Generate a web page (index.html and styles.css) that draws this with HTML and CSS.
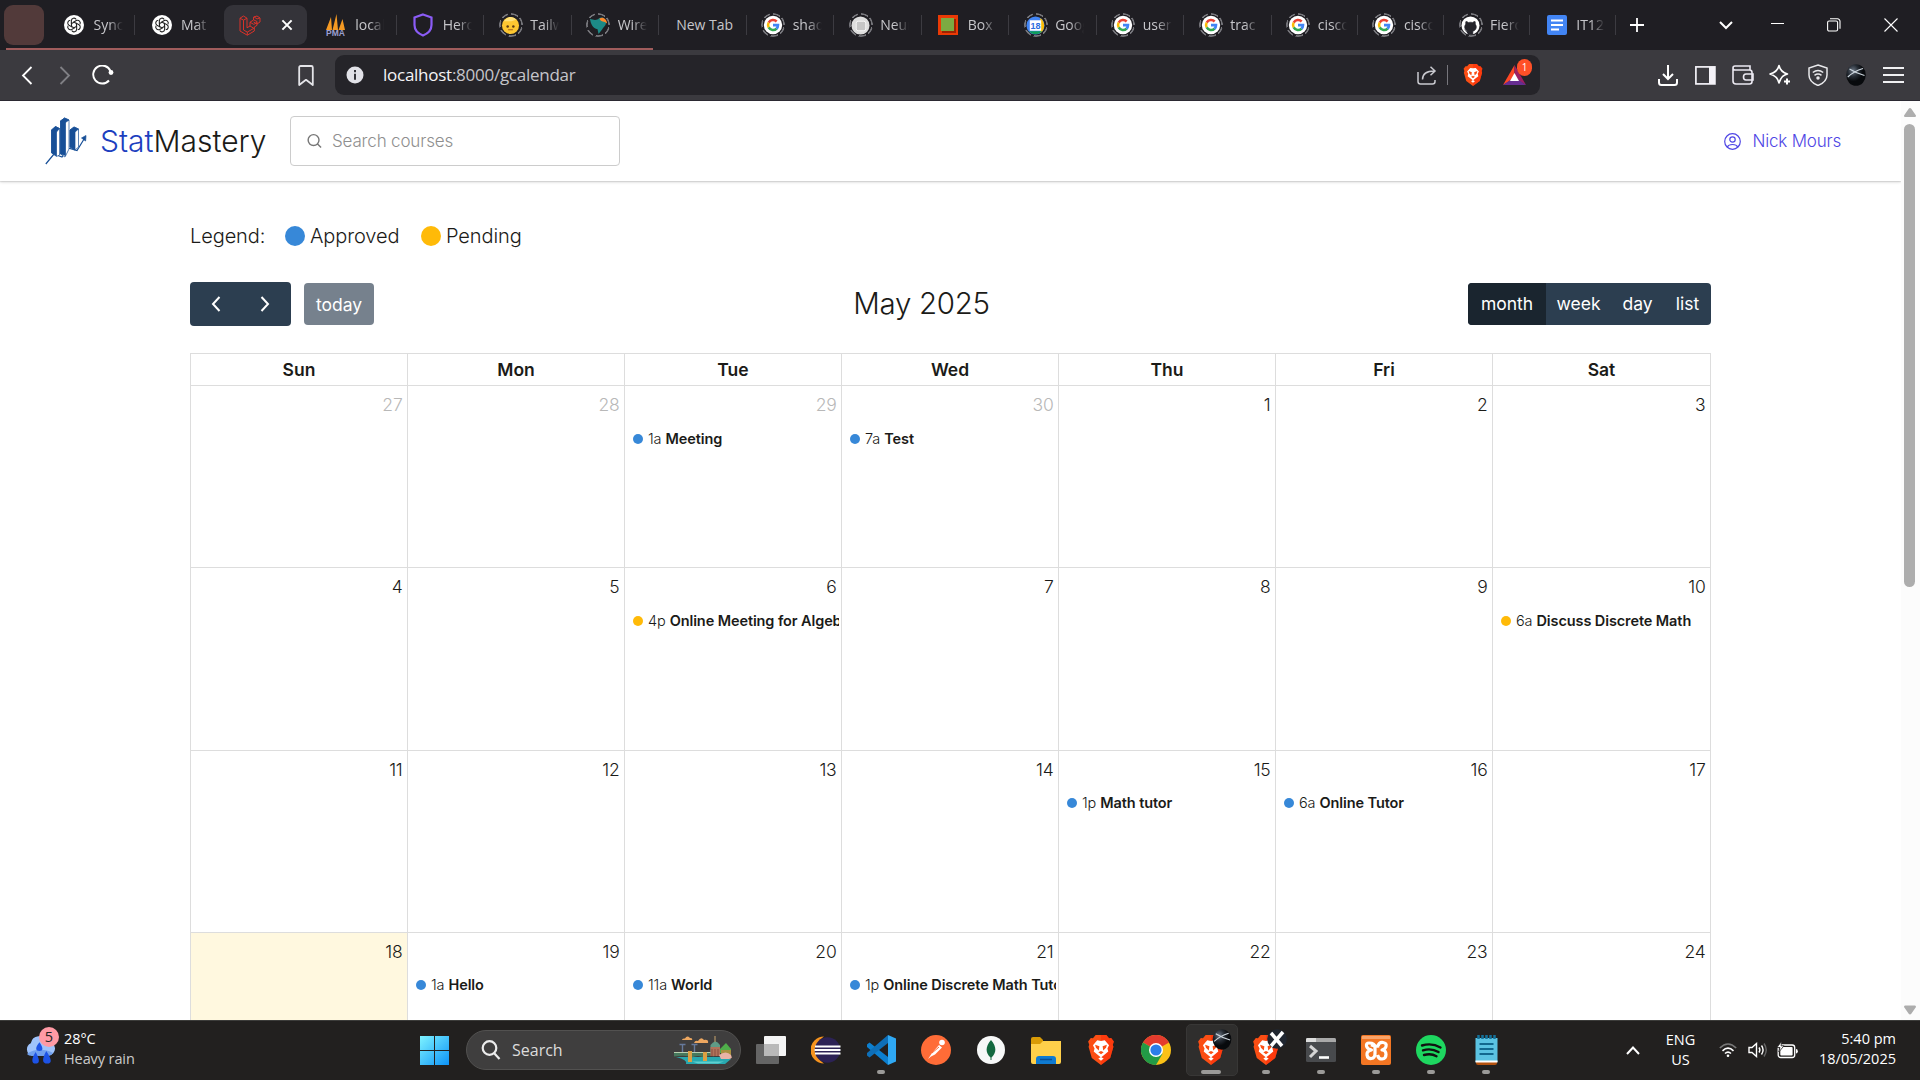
FILE: index.html
```html
<!DOCTYPE html>
<html lang="en">
<head>
<meta charset="utf-8">
<title>StatMastery</title>
<link rel="stylesheet" href="styles.css">
</head>
<body>
<svg class="defs" aria-hidden="true">
  <defs>
    <symbol id="google" viewBox="0 0 24 24"><circle cx="12" cy="12" r="10" fill="#fff"/><g fill="none" stroke-width="2.8"><path d="M7.3 9.3A5.5 5.5 0 0 1 16 8.2" stroke="#ea4335"/><path d="M7.3 14.7a5.5 5.5 0 0 1 0-5.4" stroke="#fbbc05"/><path d="M16 15.9a5.5 5.5 0 0 1-8.7-1.2" stroke="#34a853"/><path d="M12 12.1h5.5a5.5 5.5 0 0 1-1.7 4" stroke="#4285f4"/></g></symbol>
    <symbol id="gpt" viewBox="0 0 24 24"><circle cx="12" cy="12" r="12" fill="#fff"/><g fill="none" stroke="#222" stroke-width="1.3"><path d="M12 8.6 8.8 10.4V6.9a3.2 3.2 0 0 1 5.9-1.6"/><path d="M12 8.6 8.8 10.4V6.9a3.2 3.2 0 0 1 5.9-1.6" transform="rotate(60 12 12)"/><path d="M12 8.6 8.8 10.4V6.9a3.2 3.2 0 0 1 5.9-1.6" transform="rotate(120 12 12)"/><path d="M12 8.6 8.8 10.4V6.9a3.2 3.2 0 0 1 5.9-1.6" transform="rotate(180 12 12)"/><path d="M12 8.6 8.8 10.4V6.9a3.2 3.2 0 0 1 5.9-1.6" transform="rotate(240 12 12)"/><path d="M12 8.6 8.8 10.4V6.9a3.2 3.2 0 0 1 5.9-1.6" transform="rotate(300 12 12)"/></g></symbol>
    <symbol id="brave" viewBox="0 0 24 28"><path d="M7 0h10l2.500 3 2-.2L24 6l-1 3 .6 2-3 10.500L12 28 3.400 21.500.4 11 1 9 0 6l2.500-3.200 2 .2z" fill="#fb4e14"/><path d="M12 0h5l2.500 3 2-.2L24 6l-1 3 .6 2-3 10.500L12 28z" fill="#ff2b0a" opacity=".55"/><path d="M12 5.500 15.500 5l4 4.500-1.500 3 .8 3-4.200 3.300L12 21l-2.600-2.200L5.200 15.500l.8-3-1.500-3 4-4.500z" fill="#fff"/><path d="m6.500 9 4 1.500-.6 4-2.600-2.500zM17.500 9l-4 1.500.6 4 2.600-2.500zM9.500 16.200 12 15l2.500 1.200L12 18z" fill="#fb4e14"/><path d="M9.500 22 12 20.500l2.500 1.500L12 24z" fill="#fff"/></symbol>
    <radialGradient id="sphere" cx=".35" cy=".3"><stop offset="0" stop-color="#6b7684"/><stop offset=".55" stop-color="#252b33"/><stop offset="1" stop-color="#080a0d"/></radialGradient>
    <symbol id="ball" viewBox="0 0 20 22"><ellipse cx="10" cy="11" rx="9.800" ry="10.800" fill="url(#sphere)"/><path d="M1.800 13C6 9 12 6 17 4.500M3.500 5c4 2.500 9 5 15 6.500" fill="none" stroke="#cdd6de" stroke-width="1.200"/></symbol>
  </defs>
</svg>

<div class="tabstrip">
  <div class="pinned"></div>
  <div class="tab"><span class="fav"><svg width="20" height="20"><use href="#gpt"/></svg></span><span class="label">Sync</span></div>
  <div class="tab nosep"><span class="fav"><svg width="20" height="20"><use href="#gpt"/></svg></span><span class="label">Mat</span></div>
  <div class="tab active"><span class="fav"><svg width="22" height="21" viewBox="0 0 22 21" fill="none" stroke="#d8322a" stroke-width="1" stroke-linejoin="round"><path d="M1 3.200 4.500 1 8 3.200v9.600l3-1.800V7.200L14.500 5l.1-3L18 1l3 2v4l-3 2-3.400-2M1 3.200l3.500 2L8 3.200M1 3.200V16l7.300 4.200 7-4.200v-4l2.700-1.700V6.500L15 5m-4 2.200 3.800 2.200L18 7.500M11 11l3.800 2.300-6.500 3.800L4.500 15V5.200m3.800 11.900v3.100M15 1.800 18 4l3-1.200"/></svg></span><svg class="tabclose" width="12" height="12" viewBox="0 0 13 13" stroke="#fff" stroke-width="2.200"><path d="M1.500 1.500l10 10m0-10-10 10"/></svg></div>
  <div class="tab"><span class="fav"><svg width="21" height="24" viewBox="0 0 21 24"><path d="M1 17 6 4l1 13zM7.500 17l4-16 1.500 16zM13.500 17l4-11 2.500 11z" fill="#f59a23"/><text x="10.500" y="23" text-anchor="middle" class="pma">PMA</text></svg></span><span class="label">local</span></div>
  <div class="tab"><span class="fav"><svg width="20" height="24" viewBox="0 0 20 24"><path d="M10 1.500 18.500 4.500V12c0 4.800-3.500 8.500-8.500 10.500C5 20.500 1.500 16.800 1.500 12V4.500z" fill="none" stroke="#8b5cf6" stroke-width="2.200"/></svg></span><span class="label">Hero</span></div>
  <div class="tab"><span class="fav ring"><svg width="19" height="19" viewBox="0 0 20 20"><circle cx="10" cy="10" r="9" fill="#fdc731"/><circle cx="7" cy="11" r="1.300" fill="#5b3a12"/><circle cx="13" cy="11" r="1.300" fill="#5b3a12"/><path d="M3 5.500C6 0 13 0 16 4l-5 1.500z" fill="#ffe27a"/><path d="M7.500 14.500h5" stroke="#a15c1d"/></svg></span><span class="label">Tailw</span></div>
  <div class="tab"><span class="fav ring"><svg width="19" height="19" viewBox="0 0 20 20"><path d="M1 3c5 2 8 1 9 0 3-3 7-1 8 3 0 5-3 5-4 8l-4 5-1-5C4 13 2 9 1 3z" fill="#1d8a87"/><path d="M11 3c3-3 8 0 8 5-3-3-6-1-8-5z" fill="#ff8a2a"/></svg></span><span class="label">Wire</span></div>
  <div class="tab"><span class="label plain">New Tab</span></div>
  <div class="tab"><span class="fav ring"><svg width="22" height="22"><use href="#google"/></svg></span><span class="label">shad</span></div>
  <div class="tab"><span class="fav ring"><svg width="19" height="19" viewBox="0 0 20 20"><circle cx="10" cy="10" r="9.500" fill="#dedede"/><rect x="5.500" y="5.500" width="10" height="10" rx="2" fill="#c6c6c6" stroke="#f7f7f7"/></svg></span><span class="label">Neun</span></div>
  <div class="tab"><span class="fav"><svg width="20" height="20" viewBox="0 0 20 20"><rect width="20" height="20" fill="#ea3a05"/><rect x="4" y="4" width="14" height="14" fill="#9b2402"/><rect x="3" y="3" width="13" height="13" fill="#7cab42"/></svg></span><span class="label">Box</span></div>
  <div class="tab"><span class="fav ring"><svg width="19" height="19" viewBox="0 0 20 20"><circle cx="10" cy="10" r="9.500" fill="#4285f4"/><path d="M15 2v16c5-3 6-12 0-16z" fill="#fbbc04"/><path d="M3 16c4 4 10 4 14 0z" fill="#0f9d58"/><rect x="4" y="4.500" width="12" height="11" fill="#fff"/><text x="10" y="13.400" text-anchor="middle" class="date18">18</text></svg></span><span class="label">Goog</span></div>
  <div class="tab"><span class="fav ring"><svg width="22" height="22"><use href="#google"/></svg></span><span class="label">user</span></div>
  <div class="tab"><span class="fav ring"><svg width="22" height="22"><use href="#google"/></svg></span><span class="label">trac</span></div>
  <div class="tab slim"><span class="fav ring"><svg width="22" height="22"><use href="#google"/></svg></span><span class="label">cisco</span></div>
  <div class="tab slim"><span class="fav ring"><svg width="22" height="22"><use href="#google"/></svg></span><span class="label">cisco</span></div>
  <div class="tab slim"><span class="fav ring"><svg width="19" height="19" viewBox="0 0 20 20"><circle cx="10" cy="10" r="9.500" fill="#fff"/><path d="M7.500 19v-3c-2 .5-3-.5-3.700-1.800M7.500 16c-4-1-4.500-5-2.500-7.500-.3-1-.2-2 .2-2.800 1 0 2 .6 2.600 1.100a9 9 0 0 1 4.400 0c.6-.5 1.600-1.100 2.600-1.100.4.800.5 1.800.2 2.800 2 2.500 1.500 6.500-2.500 7.500v3.500h-5z" fill="#24242a" stroke="#24242a" stroke-width=".6"/></svg></span><span class="label">Fiero</span></div>
  <div class="tab slim"><span class="fav"><svg width="20" height="20" viewBox="0 0 20 20"><rect width="20" height="20" rx="2" fill="#4285f4"/><path d="M4 5.500h12M4 10h12M4 14.500h8" stroke="#fff" stroke-width="2.200"/></svg></span><span class="label">IT12</span></div>
  <svg class="newtab" width="14" height="14" viewBox="0 0 14 14" stroke="#fff" stroke-width="1.800"><path d="M7 0v14M0 7h14"/></svg>
  <div class="winbtns">
    <svg class="down" width="14" height="9" viewBox="0 0 14 9" fill="none" stroke="#fff" stroke-width="2"><path d="M1 1l6 6 6-6"/></svg>
    <svg width="13" height="14" viewBox="0 0 13 14" stroke="#fff"><path d="M0 5.500h13"/></svg>
    <svg width="14" height="14" viewBox="0 0 14 14" fill="none" stroke="#fff" stroke-width="1.100"><rect x=".6" y="3" width="10" height="10" rx="1.500"/><path d="M3 .8h7.500a2.500 2.500 0 0 1 2.500 2.500v7.500"/></svg>
    <svg width="14" height="14" viewBox="0 0 14 14" stroke="#fff" stroke-width="1.100"><path d="M.5.500l13 13m0-13-13 13"/></svg>
  </div>
  <div class="groupline"></div>
</div>

<div class="toolbar">
  <span class="tool"><svg width="12" height="19" viewBox="0 0 12 19" fill="none" stroke="#fff" stroke-width="1.800"><path d="M10.500 1 2 9.500l8.500 8.500"/></svg></span>
  <span class="tool"><svg width="12" height="19" viewBox="0 0 12 19" fill="none" stroke="#808085" stroke-width="1.800"><path d="M1.500 1 10 9.500 1.500 18"/></svg></span>
  <span class="tool"><svg width="22" height="20" viewBox="0 0 22 20" fill="none" stroke="#fff" stroke-width="1.900"><path d="M17 15.500A9 9 0 1 1 18.500 6"/><circle cx="19" cy="7.500" r="2.400" fill="#fff" stroke="none"/></svg></span>
  <span class="tool bookmark"><svg width="16" height="21" viewBox="0 0 16 21" fill="none" stroke="#e4e4e8" stroke-width="1.800" stroke-linejoin="round"><path d="M1.200 2.500Q1.200 1 2.700 1h10.600q1.500 0 1.500 1.500V20L8 14.800 1.200 20z"/></svg></span>
  <div class="urlbar">
    <svg width="18" height="18" viewBox="0 0 18 18"><circle cx="9" cy="9" r="8.500" fill="#e2e2e8"/><path d="M9 4v2.200M9 7.800v6" stroke="#333338" stroke-width="2"/></svg>
    <span class="url"><b>localhost</b>:8000/gcalendar</span>
    <span class="tool share"><svg width="20" height="19" viewBox="0 0 20 19" fill="none" stroke="#c9c9cf" stroke-width="1.500"><path d="M1 6v9.500Q1 18 3.500 18h12q2.500 0 2.500-2.500V14M5.500 13.500C5.500 8 9 5 17.500 5M13.500.8 18 5l-4.500 4.200"/></svg></span>
    <span class="sep"></span>
    <span class="tool shield"><svg width="20" height="22"><use href="#brave"/></svg></span>
    <span class="tool bat"><svg width="23" height="20" viewBox="0 0 23 20"><path d="M11.500 0 0 20l11.500-7z" fill="#ff4724"/><path d="M11.500 0 23 20l-11.500-7z" fill="#9e1f63"/><path d="M0 20h23l-11.500-8z" fill="#662d91"/><path d="m11.500 8 4.500 8H7z" fill="#fff"/></svg><i class="badge">1</i></span>
  </div>
  <div class="exts">
    <span><svg width="20" height="21" viewBox="0 0 20 21" fill="none" stroke="#fff" stroke-width="2"><path d="M10 0v14M5 9l5 5 5-5M1 14v3.500Q1 20 3.500 20h13q2.500 0 2.500-2.500V14"/></svg></span>
    <span><svg width="21" height="19" viewBox="0 0 21 19"><rect x=".9" y=".9" width="19" height="17" fill="none" stroke="#f4f2f8" stroke-width="1.700"/><path d="M14 1h6v17h-6z" fill="#f4f2f8"/></svg></span>
    <span><svg width="22" height="20" viewBox="0 0 22 20" fill="none" stroke="#ece9f2" stroke-width="1.600"><path d="M1 3.500V16q0 3 3 3h13.500q2.500 0 2.500-2.500V7.500Q20 5 17.500 5H3Q1 5 1 3t2-2h15v4M21 9h-7q-2.500 0-2.500 3t2.500 3h7z"/></svg></span>
    <span><svg width="22" height="22" viewBox="0 0 22 22" fill="none" stroke="#fff" stroke-width="1.600" stroke-linejoin="round"><path d="M10 1.500q1.500 6.500 8.500 8.500-3 .8-4.800 2.300Q11.500 14.500 10 19q-1.500-7-9-9 7.500-2 9-8.500z"/><path d="M18 14.500v6M15 17.500h6" stroke-width="2"/></svg></span>
    <span><svg width="20" height="22" viewBox="0 0 20 22" fill="none" stroke="#e9e9ec" stroke-width="1.500"><path d="M10 1 19 4v7c0 5-4 8.500-9 10.500C5 19.500 1 16 1 11V4z"/><path d="M4.800 8.500q5.200-4 10.400 0M6.500 11.300q3.500-2.600 7 0"/><circle cx="10" cy="14" r="1" fill="#fff"/></svg></span>
    <span><svg width="20" height="22"><use href="#ball"/></svg></span>
    <span><svg width="21" height="18" viewBox="0 0 21 18" stroke="#f0f0f2" stroke-width="1.900"><path d="M0 2h21M0 9h21M0 16h21"/></svg></span>
  </div>
</div>

<div class="viewport">
  <div class="page">
    <header class="nav">
      <svg class="logo" width="42" height="48" viewBox="0 0 42 48" fill="#fff" stroke="#174f97" stroke-width=".7">
        <path d="M.8 47 9 37l8 3 6-9 9 2.500 8-13" fill="none" stroke-width="1.200"/><path d="m36.500 21 4.500-2.500-.4 5.500z" fill="#174f97"/>
        <path d="m6.500 13 4-3.500 4 2v26.500l-3 1.500-5-4z"/><path d="m6.500 13 5 2v24l-5-3zm0 0 4-3.500 4 2-3 3.500z" fill="#174f97"/>
        <path d="m15.500 4 4-3 4.500 2v29l-4 8-4.500-3z"/><path d="m15.500 4 5 1.500v33L15.500 37zm0 0 4-3 4.500 2L20.500 5.500z" fill="#174f97"/>
        <path d="m25 13 4-3 4.500 2v18l-3.500 3-5-3z"/><path d="m25 13 5 2v18l-5-3zm0 0 4-3 4.500 2-3.500 3z" fill="#174f97"/>
      </svg>
      <div class="brand"><span>Stat</span>Mastery</div>
      <div class="search"><svg width="15" height="16" viewBox="0 0 16 16" fill="none" stroke="#777" stroke-width="1.500"><circle cx="7" cy="7" r="5.800"/><path d="m11 11 4 4"/></svg><span>Search courses</span></div>
      <div class="user"><svg width="17" height="17" viewBox="0 0 17 17" fill="none" stroke="#4f46e5" stroke-width="1.200"><circle cx="8.500" cy="8.500" r="7.800"/><circle cx="8.500" cy="6.500" r="2.700"/><path d="M3.300 14q1.200-2.500 5.200-2.500t5.200 2.500"/></svg><span>Nick Mours</span></div>
    </header>
    <main class="content">
      <div class="legend"><span class="lg">Legend:</span><i class="key blue"></i><span class="ap">Approved</span><i class="key amber"></i><span>Pending</span></div>
      <div class="calbar">
        <div class="btns arrows">
          <svg width="10" height="16" viewBox="0 0 10 16" fill="none" stroke="#fff" stroke-width="2"><path d="M8.500 1 2 8l6.500 7"/></svg>
          <svg width="10" height="16" viewBox="0 0 10 16" fill="none" stroke="#fff" stroke-width="2"><path d="M1.500 1 8 8l-6.500 7"/></svg>
        </div>
        <div class="btns today">today</div>
        <h2 class="title">May 2025</h2>
        <div class="btns views"><span class="on">month</span><span>week</span><span>day</span><span>list</span></div>
      </div>
      <div class="cal">
        <div class="th">Sun</div><div class="th">Mon</div><div class="th">Tue</div><div class="th">Wed</div><div class="th">Thu</div><div class="th">Fri</div><div class="th">Sat</div>
        <div class="day other"><b>27</b></div>
        <div class="day other"><b>28</b></div>
        <div class="day other"><b>29</b><p class="ev"><i class="blue"></i><span>1a</span><strong>Meeting</strong></p></div>
        <div class="day other"><b>30</b><p class="ev"><i class="blue"></i><span>7a</span><strong>Test</strong></p></div>
        <div class="day"><b>1</b></div>
        <div class="day"><b>2</b></div>
        <div class="day"><b>3</b></div>
        <div class="day"><b>4</b></div>
        <div class="day"><b>5</b></div>
        <div class="day"><b>6</b><p class="ev"><i class="amber"></i><span>4p</span><strong>Online Meeting for Algebra</strong></p></div>
        <div class="day"><b>7</b></div>
        <div class="day"><b>8</b></div>
        <div class="day"><b>9</b></div>
        <div class="day"><b>10</b><p class="ev"><i class="amber"></i><span>6a</span><strong>Discuss Discrete Math</strong></p></div>
        <div class="day"><b>11</b></div>
        <div class="day"><b>12</b></div>
        <div class="day"><b>13</b></div>
        <div class="day"><b>14</b></div>
        <div class="day"><b>15</b><p class="ev"><i class="blue"></i><span>1p</span><strong>Math tutor</strong></p></div>
        <div class="day"><b>16</b><p class="ev"><i class="blue"></i><span>6a</span><strong>Online Tutor</strong></p></div>
        <div class="day"><b>17</b></div>
        <div class="day now"><b>18</b></div>
        <div class="day"><b>19</b><p class="ev"><i class="blue"></i><span>1a</span><strong>Hello</strong></p></div>
        <div class="day"><b>20</b><p class="ev"><i class="blue"></i><span>11a</span><strong>World</strong></p></div>
        <div class="day"><b>21</b><p class="ev"><i class="blue"></i><span>1p</span><strong>Online Discrete Math Tutor</strong></p></div>
        <div class="day"><b>22</b></div>
        <div class="day"><b>23</b></div>
        <div class="day"><b>24</b></div>
      </div>
    </main>
  </div>
  <div class="scroll">
    <svg width="12" height="9" viewBox="0 0 12 9"><path d="M6 0q.8 0 1.300.8L12 7.500Q12 9 11 9H1Q0 9 0 7.500L4.700.8Q5.200 0 6 0z" fill="#adadad"/></svg>
    <div class="thumb"></div>
    <svg width="12" height="10" viewBox="0 0 12 9"><path d="M6 9q.8 0 1.300-.8L12 1.500Q12 0 11 0H1Q0 0 0 1.500l4.700 6.700Q5.200 9 6 9z" fill="#adadad"/></svg>
  </div>
</div>

<footer class="taskbar">
  <div class="weather">
    <svg width="31" height="32" viewBox="0 0 32 32"><path d="M8 22a7 7 0 0 1-1-13A9 9 0 0 1 24 7a7.500 7.500 0 0 1 1 15z" fill="#9fc3fb"/><path d="M3 20a7 7 0 0 0 5 2h17a6 6 0 0 0 5-3c-8-4-19-5-27 1z" fill="#6f9fee"/><path d="M16 8c-5 6-4 9 0 9s4-3 0-9zM12 18c-5 8-4 12 0 12s5-3 0-12zM23 17c-5 9-4 13 1 13s5-4-1-13z" fill="#1d53e6"/></svg>
    <i class="wbadge">5</i>
    <div class="wtext"><span>28°C</span><span class="dim">Heavy rain</span></div>
  </div>
  <span class="app"><svg width="29" height="29" viewBox="0 0 29 29"><defs><linearGradient id="w" x2="1" y2="1"><stop stop-color="#7ef3ff"/><stop offset="1" stop-color="#0d93f7"/></linearGradient></defs><path d="M0 0h14v14H0zM15 0h14v14H15zM0 15h14v14H0zM15 15h14v14H15z" fill="url(#w)"/></svg></span>
  <div class="tsearch"><svg width="20" height="20" viewBox="0 0 20 20" fill="none" stroke="#ececec" stroke-width="2.200"><circle cx="8.500" cy="8" r="6.800"/><path d="m13 13 5.500 6"/></svg><span>Search</span>
    <svg class="city" width="58" height="29" viewBox="0 0 58 29"><path d="M2 21h48l7 2-6 5H12q2-4-10-7z" fill="#28a9b0"/><path d="M18 25.500h32l-6 2H24z" fill="#5ed0d0"/><path d="M0 17h40v3.500q-5-2-10 1-6-3-12 0-6-3-18-1z" fill="#47795d"/><path d="M0 16.500h40" stroke="#b9cfb0" stroke-width="1.200"/><path d="M8 4q0-2 3-1.500 2-3.500 5-.5 3 0 2 2zM20 7q1-3 4-2 3-5 6-1 5-1 4 3z" fill="#eda760"/><path d="M36.500 9q5-7 9.500 0v9h-9.500z" fill="#5f9b86"/><path d="M36.500 11H46v9h-9.500z" fill="#b0735a"/><path d="M38 20v-7M41 20v-7M44 20v-7" stroke="#8a4f41"/><path d="M41 0v6" stroke="#c9a46c"/><path d="m46 13 6-6 5 6v4H46z" fill="#4fae4a"/><path d="M47 14h10v5H47z" fill="#a8903f"/><path d="M45 19q7-5 12 0 2 4-2 4H47z" fill="#e8b3a6"/><path d="M14 15h4v11h-4zM29 16h4v9h-4z" fill="#dba043"/><path d="M8.500 8v8M20.500 8v8M5.500 8.500h6M17.500 8.500h6" stroke="#66799b" stroke-width="1.400"/></svg>
  </div>
  <span class="app"><svg width="30" height="28" viewBox="0 0 30 28"><rect x="8" width="22" height="20" rx="1" fill="#f4f4f4"/><rect y="8" width="23" height="20" rx="1" fill="#777" opacity=".8"/><path d="M8 8h15v12H8z" fill="#b9b9b9"/></svg></span>
  <span class="app"><svg width="30" height="28" viewBox="0 0 30 28"><path d="M13 .5a13.500 13.500 0 0 0 0 27C4 22 4 6 13 .5z" fill="#f7941e"/><circle cx="16.500" cy="14" r="12.800" fill="#2c2255"/><path d="M4 10.500h25.500M3.500 14h26M4 17.500h25.500" stroke="#fff" stroke-width="1.900"/></svg></span>
  <span class="app run"><svg width="30" height="30" viewBox="0 0 30 30"><path d="M1 9.500 3.500 7.500 22 22v8L1 12z" fill="#0c7fcf"/><path d="M1 20.500 3.500 22.500 22 8V0L1 18z" fill="#0e6fb8"/><path d="m22 0 8 3.500v23L22 30z" fill="#2fa8f3"/></svg></span>
  <span class="app"><svg width="30" height="30" viewBox="0 0 30 30"><circle cx="15" cy="15" r="15" fill="#ff6c37"/><circle cx="21" cy="7.500" r="2.800" fill="#fff"/><path d="m7 24 4-6 7-8 3 2.500-7 7-4 2z" fill="#fff"/><path d="m11 18 7-6" stroke="#ff6c37"/></svg></span>
  <span class="app"><svg width="28" height="28" viewBox="0 0 28 28"><circle cx="14" cy="14" r="14" fill="#f7f8f8"/><path d="M14 4c6 7 5.500 13 .5 17.500V24h-1v-2.500C8.500 17 8 11 14 4z" fill="#13683f"/></svg></span>
  <span class="app"><svg width="30" height="27" viewBox="0 0 30 27"><path d="M0 2q0-2 2-2h7l3 3v6H0z" fill="#d99b06"/><path d="M0 7h9l3-3h18v21q0 2-2 2H2q-2 0-2-2z" fill="#ffd04a"/><path d="M5 27v-5q0-3 3-3h14q3 0 3 3v5z" fill="#0f7bd2"/><path d="M9 22.500h12" stroke="#0a4f95" stroke-width="1.500"/></svg></span>
  <span class="app"><svg width="26" height="30"><use href="#brave"/></svg></span>
  <span class="app"><svg width="30" height="30" viewBox="0 0 30 30"><circle cx="15" cy="15" r="15" fill="#fbc116"/><path d="M15 15 2 7.500A15 15 0 0 1 28 7.500z" fill="#e33b2e"/><path d="M2 7.500A15 15 0 0 0 15 30l6.500-11.200L15 15z" fill="#229a46"/><circle cx="15" cy="15" r="7" fill="#fff"/><circle cx="15" cy="15" r="5.600" fill="#2b7de9"/></svg></span>
  <span class="app run current"><svg width="26" height="30"><use href="#brave"/></svg><svg class="over" width="20" height="21"><use href="#ball"/></svg></span>
  <span class="app run"><svg width="26" height="30"><use href="#brave"/></svg><svg class="over" width="20" height="21" viewBox="0 0 20 21"><circle cx="10" cy="10" r="9.800" fill="#202630"/><path d="m4 4 11 13M16 3 4 17" stroke="#fff" stroke-width="3.500"/></svg></span>
  <span class="app run"><svg width="30" height="24" viewBox="0 0 30 24"><rect width="30" height="24" rx="1.500" fill="#484a4d"/><path d="M0 4V1.500Q0 0 1.500 0h27Q30 0 30 1.500V4z" fill="#a9a9a9"/><path d="M0 4V1.500Q0 0 1.500 0H10v4z" fill="#ddd"/><path d="m4 8 6 5-6 6" fill="none" stroke="#d5d5d5" stroke-width="3"/><path d="M13 19.500h10" stroke="#fff" stroke-width="2.600"/></svg></span>
  <span class="app run"><svg width="30" height="30" viewBox="0 0 30 30"><rect width="30" height="30" rx="2" fill="#f37623"/><path d="M1 1h28v3H1z" fill="#f9a46a"/><path d="M8 8q-3 0-2.500 3 .5 3 5 4-5 1-4.500 5 .5 4 4.500 3.500 3.500-.5 3.500-5V12q0-4-6-4zM17 11q1-4 5-3.500 4 .5 3 4-.5 2.500-4 3.500 4 0 4 4.500 0 4-4 4.500-3.500 0-4.500-4" fill="none" stroke="#fff" stroke-width="3.200" stroke-linejoin="round"/><path d="M10 10q4 2 8 1" stroke="#fff" stroke-width="3" fill="none"/></svg></span>
  <span class="app run"><svg width="30" height="30" viewBox="0 0 30 30"><circle cx="15" cy="15" r="15" fill="#1ed760"/><path d="M6 10.500q10-3 18.500 2M7 15.300q8.500-2.500 15.500 1.800M8 20q7-2 12.500 1.200" fill="none" stroke="#111" stroke-width="2.400" stroke-linecap="round"/></svg></span>
  <span class="app run"><svg width="23" height="30" viewBox="0 0 23 30"><path d="M1 24h21v4q0 2-2 2H3q-2 0-2-2z" fill="#b4520f"/><path d="M.5 3h22v24H.5z" fill="#5bc3e2"/><path d="M.5 25.500h22v2H.5z" fill="#fff"/><path d="M4.500 9h14M4.500 14h14M4.500 19h14" stroke="#12688e" stroke-width="1.800"/><path d="M3.500 0v4M7.500 0v4M11.500 0v4M15.500 0v4M19.500 0v4" stroke="#14719a" stroke-width="2.500"/></svg></span>
  <div class="tray">
    <svg width="14" height="9" viewBox="0 0 14 9" fill="none" stroke="#fff" stroke-width="2"><path d="m1 8 6-6.500L13 8"/></svg>
    <div class="lang"><span>ENG</span><span>US</span></div>
    <svg class="wifi" width="18" height="16" viewBox="0 0 18 16" fill="none" stroke="#fff" stroke-width="1.600"><path d="M.8 6q8.200-8 16.400 0" stroke="#777"/><path d="M3.500 8.800q5.500-5.200 11 0M6 11.500q3-2.800 6 0"/><circle cx="9" cy="13.800" r="1.300" fill="#fff" stroke="none"/></svg>
    <svg class="vol" width="20" height="16" viewBox="0 0 20 16" fill="none" stroke="#fff" stroke-width="1.400"><path d="M1 5.500v5h3l4.500 4V1.500L4 5.500z"/><path d="M11 5.500q1.800 2.500 0 5M13.500 3.500q3.200 4.500 0 9"/><path d="M16 1.500q4.500 6.500 0 13" stroke="#666"/></svg>
    <svg class="batt" width="21" height="18" viewBox="0 0 21 18"><rect x="1.200" y="4" width="16.500" height="12.500" rx="2.500" fill="none" stroke="#fff" stroke-width="1.300"/><rect x="3.300" y="6" width="12.300" height="8.500" rx="1" fill="#fff"/><path d="M19 8q1.800 0 1.800 2.300T19 12.600z" fill="#fff"/><path d="M4.800 0 0 6.500h3L1.800 11 7 4.800H4z" fill="#fff" stroke="#22201f" stroke-width=".8"/></svg>
    <div class="clock"><span>5:40 pm</span><span>18/05/2025</span></div>
  </div>
</footer>
</body>
</html>
```
FILE: styles.css
```css
* { box-sizing: border-box; }
body {
  margin: 0;
  width: 1920px;
  height: 1080px;
  overflow: hidden;
  display: flex;
  flex-direction: column;
  background: #fff;
  font-family: "Open Sans", "Noto Sans", sans-serif;
  color: #1b1b18;
}
i { font-style: normal; }
svg { flex: none; display: block; }
.defs { position: absolute; width: 0; height: 0; }

/* Browser tabs */
.tabstrip {
  position: relative;
  flex: none;
  height: 50px;
  display: flex;
  background: #1f1e23;
}
.pinned { width: 40px; height: 40px; margin: 5px 3.5px 0 4px; border-radius: 9px; background: #523a3a; }
.tab {
  position: relative;
  width: 87.5px;
  height: 50px;
  display: flex;
  align-items: center;
  flex: none;
}
.tab.slim { width: 86.2px; }
.tab::after { content: ""; position: absolute; right: 0; top: 15px; width: 1px; height: 20px; background: #3c3b41; }
.tab.nosep::after, .tab.active::after { display: none; }
.tab.active { width: 83px; height: 40px; margin: 5px 2.2px 0 1.500px; border-radius: 9px; background: #343339; }
.fav { position: relative; width: 28px; height: 28px; margin-left: 12.5px; flex: none; display: flex; align-items: center; justify-content: center; }
.tab.active .fav { margin-left: 11.500px; }
.ring::before {
  content: "";
  position: absolute;
  left: 2px;
  top: 2px;
  width: 24px;
  height: 24px;
  border-radius: 50%;
  background: repeating-conic-gradient(#77777c 0 38deg, transparent 38deg 51.430deg);
  -webkit-mask-image: radial-gradient(circle, transparent 10px, #000 10.600px);
  mask-image: radial-gradient(circle, transparent 10px, #000 10.600px);
}
.ring svg { position: relative; }
.tabclose { margin-left: 17px; }
.label {
  width: 29px;
  margin-left: 5.5px;
  padding-bottom: 1px;
  overflow: hidden;
  white-space: nowrap;
  font-size: 14px;
  color: #c6c6ca;
  -webkit-mask-image: linear-gradient(90deg, #000 50%, transparent);
  mask-image: linear-gradient(90deg, #000 50%, transparent);
}
.label.plain { width: 60px; margin-left: 17px; -webkit-mask-image: none; mask-image: none; }
.pma { font: bold 8.500px "Liberation Sans", sans-serif; fill: #9a9fd0; }
.date18 { font: bold 9.500px "Liberation Sans", sans-serif; fill: #2b6de0; }
.newtab { margin: 18px 0 0 14px; }
.winbtns { margin-left: auto; display: flex; align-items: center; gap: 43px; padding-right: 22px; }
.down { margin-right: -5px; }
.groupline { position: absolute; left: 6px; top: 48px; width: 647px; height: 2px; background: #a05c5c; }

/* Browser toolbar */
.toolbar {
  flex: none;
  height: 51px;
  display: flex;
  align-items: center;
  padding: 0 8px;
  background: #3b3a3f;
  border-bottom: 1px solid #2b2932;
}
.tool { width: 38px; display: flex; justify-content: center; flex: none; }
.bookmark { margin-left: 165px; }
.urlbar {
  width: 1205px;
  height: 40px;
  margin-left: 10px;
  padding: 0 6px 0 11px;
  display: flex;
  align-items: center;
  border-radius: 9px;
  background: #252429;
}
.url { margin-left: 19px; padding-bottom: 2px; flex: 1; font-size: 17px; color: #c5c4ca; letter-spacing: -.26px; }
.url b { font-weight: 400; color: #f5f5f7; }
.sep { width: 1px; height: 20px; margin: 0 6px 0 1px; background: #77767c; }
.shield { margin-right: 3px; }
.bat { position: relative; margin-right: 1px; }
.badge {
  position: absolute;
  left: 22px;
  top: -6px;
  width: 15px;
  height: 17px;
  border-radius: 8px;
  background: #ff5027;
  color: #fff;
  font-size: 10px;
  line-height: 17px;
  text-align: center;
}
.exts { margin-left: auto; display: flex; }
.exts span { width: 37.6px; height: 22px; display: flex; justify-content: center; align-items: center; }

/* Page area */
.viewport { flex: 1; min-height: 0; display: flex; overflow: hidden; font-family: Inter, "Open Sans", sans-serif; font-weight: 350; }
.page { width: 1901px; }
.nav {
  height: 80px;
  padding: 0 60px 0 45px;
  display: flex;
  align-items: center;
  box-shadow: 0 1px 3px rgba(0, 0, 0, .16), 0 1px 1px rgba(0, 0, 0, .08);
}
.brand { width: 190px; margin-left: 13px; font-size: 30px; white-space: nowrap; }
.brand span { color: #1d3fbf; }
.search {
  width: 330px;
  height: 50px;
  padding-left: 16px;
  display: flex;
  align-items: center;
  gap: 10px;
  border: 1px solid #ccc;
  border-radius: 4px;
  font-size: 17px;
  letter-spacing: -.16px;
  color: #8f8f8f;
}
.user { margin-left: auto; display: flex; align-items: center; gap: 12px; font-size: 17px; letter-spacing: -.2px; color: #4f46e5; }

.content { width: 1521px; margin-left: 190px; padding-top: 40px; }
.legend { height: 30px; display: flex; align-items: center; font-size: 20px; letter-spacing: -.1px; }
.lg { width: 95px; }
.key { width: 20px; height: 20px; margin-right: 5px; border-radius: 50%; }
.ap { width: 111px; }
.blue { background: #3788d8; }
.amber { background: #ffba08; }

.calbar { height: 44px; margin-top: 31px; display: flex; align-items: center; }
.btns { display: flex; align-items: center; border-radius: 4px; background: #2c3e50; color: #fff; font-size: 17.5px; font-weight: 400; overflow: hidden; }
.arrows { width: 101px; height: 44px; padding: 0 21px; justify-content: space-between; }
.today { width: 70px; height: 42px; margin-left: 13px; justify-content: center; background: #76818d; }
.title { flex: 1; margin: 0; padding-left: 1px; text-align: center; font-size: 29.5px; font-weight: 350; line-height: 42px; height: 44px; letter-spacing: -.3px; }
.views { width: 243px; height: 42px; }
.views span { height: 42px; line-height: 41px; text-align: center; flex: 0 0 65px; }
.views .on { flex-basis: 78px; background: #1a252f; }
.views span:nth-child(3) { flex-basis: 53px; }
.views span:nth-child(4) { flex-basis: 47px; }

.cal {
  margin-top: 27px;
  display: grid;
  grid-template-columns: repeat(6, 217px) 1fr;
  grid-template-rows: 32px repeat(4, 182.300px);
  border: solid #ddd;
  border-width: 1px 0 0 1px;
}
.th { border: solid #ddd; border-width: 0 1px 1px 0; text-align: center; font-size: 17.5px; font-weight: 600; line-height: 32px; }
.day { min-width: 0; border: solid #ddd; border-width: 0 1px 1px 0; }
.day b { display: block; padding: 8px 4.5px 0 0; text-align: right; font-size: 17.5px; line-height: 22px; font-weight: 350; letter-spacing: -.2px; }
.other b { color: #b8b8b8; }
.now { background: #fff8df; }
.ev {
  margin: 10.5px 2px 0 8px;
  display: flex;
  align-items: center;
  overflow: hidden;
  white-space: nowrap;
  font-size: 14.5px;
  letter-spacing: -.1px;
  line-height: 24px;
}
.ev i { width: 10px; height: 10px; margin-right: 5px; border-radius: 50%; flex: none; }
.ev span { margin-right: 4px; }
.ev strong { font-weight: 600; }

.scroll { width: 19px; padding: 7px 0 5px 3px; display: flex; flex-direction: column; background: #fcfcfc; }
.thumb { width: 11px; height: 463px; margin: 7px 0 auto; border-radius: 6px; background: #adadad; }

/* Taskbar */
.taskbar {
  flex: none;
  height: 60px;
  padding-bottom: 1px;
  display: flex;
  align-items: center;
  background: #22201f;
  border-top: 1px solid #3c3c3a;
  color: #fff;
  font-size: 14.5px;
}
.weather { position: relative; width: 407px; padding-left: 24px; display: flex; align-items: center; }
.wbadge {
  position: absolute;
  left: 39px;
  top: -2px;
  width: 20px;
  height: 20px;
  border-radius: 50%;
  background: #ff9aa5;
  color: #222;
  line-height: 20px;
  text-align: center;
}
.wtext { margin: 0 0 2px 9px; display: flex; flex-direction: column; line-height: 20px; letter-spacing: -.1px; }
.dim { color: #ccc; }
.app { position: relative; width: 55px; height: 50px; display: flex; align-items: center; justify-content: center; flex: none; }
.run::after { content: ""; position: absolute; bottom: 1px; left: 23.5px; width: 8px; height: 4px; border-radius: 2px; background: #9b9a98; }
.current::before { content: ""; position: absolute; left: 2px; width: 50px; height: 50px; border-radius: 5px; background: #2f2e2d; border: 1px solid #383736; }
.current::after { left: 17.5px; width: 20px; }
.current svg { position: relative; }
.app .over { position: absolute; left: 28px; top: 4px; }
.tsearch {
  width: 275px;
  height: 40px;
  margin: 0 2.5px 0 4px;
  padding: 0 8px 0 14px;
  display: flex;
  align-items: center;
  border-radius: 20px;
  background: #3f3e3e;
  border: 1px solid #525150;
  font-size: 16px;
  color: #dcdcdc;
}
.tsearch span { margin-left: 11px; }
.city { margin-left: auto; }
.tray { flex: 1; display: flex; align-items: center; padding-right: 24px; }
.tray > svg:first-child { margin-left: 112px; }
.lang { width: 42px; margin-left: 20px; padding-bottom: 1px; text-align: center; }
.lang span, .clock span { display: block; line-height: 20px; }
.wifi { margin-left: 17px; }
.vol { margin-left: 11px; }
.batt { margin-left: 9px; }
.clock { margin: 0 0 2px auto; text-align: right; }
```
